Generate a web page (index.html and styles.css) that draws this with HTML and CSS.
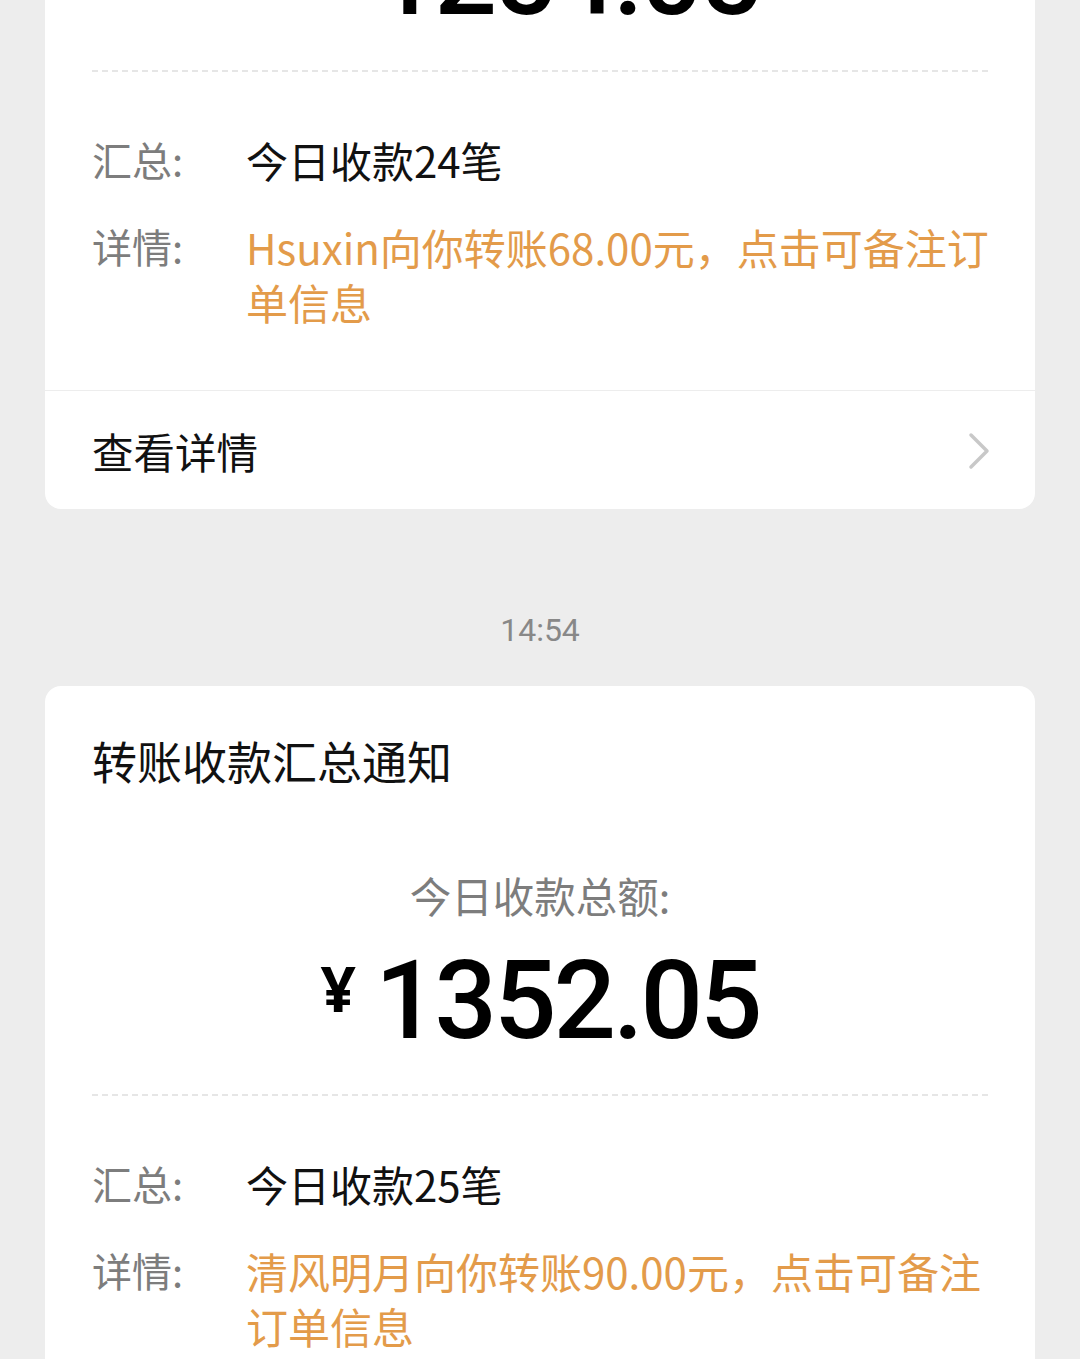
FILE: index.html
```html
<!DOCTYPE html>
<html lang="zh-CN">
<head>
  <meta charset="UTF-8" />
  <meta name="viewport" content="width=device-width, initial-scale=1" />
  <title>转账收款汇总通知</title>
  <link rel="stylesheet" href="styles.css">
</head>
<body>
  <div class="feed">
    <div class="card">
      <div class="card-body">
        <div class="card-title">转账收款汇总通知</div>
        <div class="total-label">今日收款总额:</div>
        <div class="total"><span class="yen">¥</span><span class="sum">1254.05</span></div>
        <div class="dash"></div>
        <div class="rows">
          <div class="label">汇总:</div>
          <div class="value">今日收款24笔</div>
          <div class="label">详情:</div>
          <div class="value orange">Hsuxin向你转账68.00元，点击可备注订单信息</div>
        </div>
      </div>
      <div class="card-foot">
        <span>查看详情</span>
        <svg class="chevron" width="26" height="38" viewBox="0 0 26 38">
          <polyline points="4,3 20,19 4,35" fill="none" stroke="#c8c8c8" stroke-width="3.5" stroke-linecap="round" stroke-linejoin="round" />
        </svg>
      </div>
    </div>

    <div class="time">14:54</div>

    <div class="card">
      <div class="card-body">
        <div class="card-title">转账收款汇总通知</div>
        <div class="total-label">今日收款总额:</div>
        <div class="total"><span class="yen">¥</span><span class="sum">1352.05</span></div>
        <div class="dash"></div>
        <div class="rows">
          <div class="label">汇总:</div>
          <div class="value">今日收款25笔</div>
          <div class="label">详情:</div>
          <div class="value orange">清风明月向你转账90.00元，点击可备注订单信息</div>
        </div>
      </div>
      <div class="card-foot">
        <span>查看详情</span>
        <svg class="chevron" width="26" height="38" viewBox="0 0 26 38">
          <polyline points="4,3 20,19 4,35" fill="none" stroke="#c8c8c8" stroke-width="3.5" stroke-linecap="round" stroke-linejoin="round" />
        </svg>
      </div>
    </div>
  </div>
</body>
</html>
```

FILE: styles.css
```css
body {
  margin: 0;
  background-color: #ededed;
  font-family: "Noto Sans CJK SC", "Noto Sans", sans-serif;
  color: #111;
  overflow: hidden;
}

.feed {
  padding: 0 45px;
  margin-top: -338px;
}

.card {
  background-color: #fff;
  border-radius: 16px;
}

.card-body {
  padding: 45px 40px 61px 47px;
}

.card-title {
  font-size: 45px;
  line-height: 60px;
}

.total-label {
  margin-top: 76px;
  margin-right: 7px;
  text-align: center;
  font-size: 41.5px;
  line-height: 56px;
  color: #7d7d7d;
}

.total {
  margin-top: 15px;
  margin-right: 7px;
  display: flex;
  justify-content: center;
  align-items: flex-start;
  height: 120px;
  color: #000;
}

.yen {
  font-family: "Noto Sans", sans-serif;
  font-weight: 700;
  font-size: 62px;
  line-height: 100px;
  margin-right: 19px;
}

.sum {
  font-family: Roboto, sans-serif;
  font-weight: 500;
  font-size: 110px;
  line-height: 126px;
  letter-spacing: -3px;
}

.dash {
  margin-top: 36px;
  margin-right: 7px;
  border-top: 2px dashed #e6e6e6;
}

.rows {
  margin-top: 60px;
  display: grid;
  grid-template-columns: 154px 1fr;
  row-gap: 32px;
  font-size: 42px;
  line-height: 55px;
}

.label {
  font-size: 40px;
  color: #7d7d7d;
}

.value {
  color: #111;
}

.orange {
  color: #e39b4a;
}

.card-foot {
  border-top: 1px solid #ededed;
  height: 116px;
  padding: 2px 42px 0 47px;
  display: flex;
  align-items: center;
  justify-content: space-between;
  font-size: 41.5px;
}

.chevron {
  display: block;
}

.time {
  margin: 101px 0 36px;
  text-align: center;
  font-family: Roboto, sans-serif;
  font-size: 32px;
  line-height: 40px;
  color: #888;
}
```
